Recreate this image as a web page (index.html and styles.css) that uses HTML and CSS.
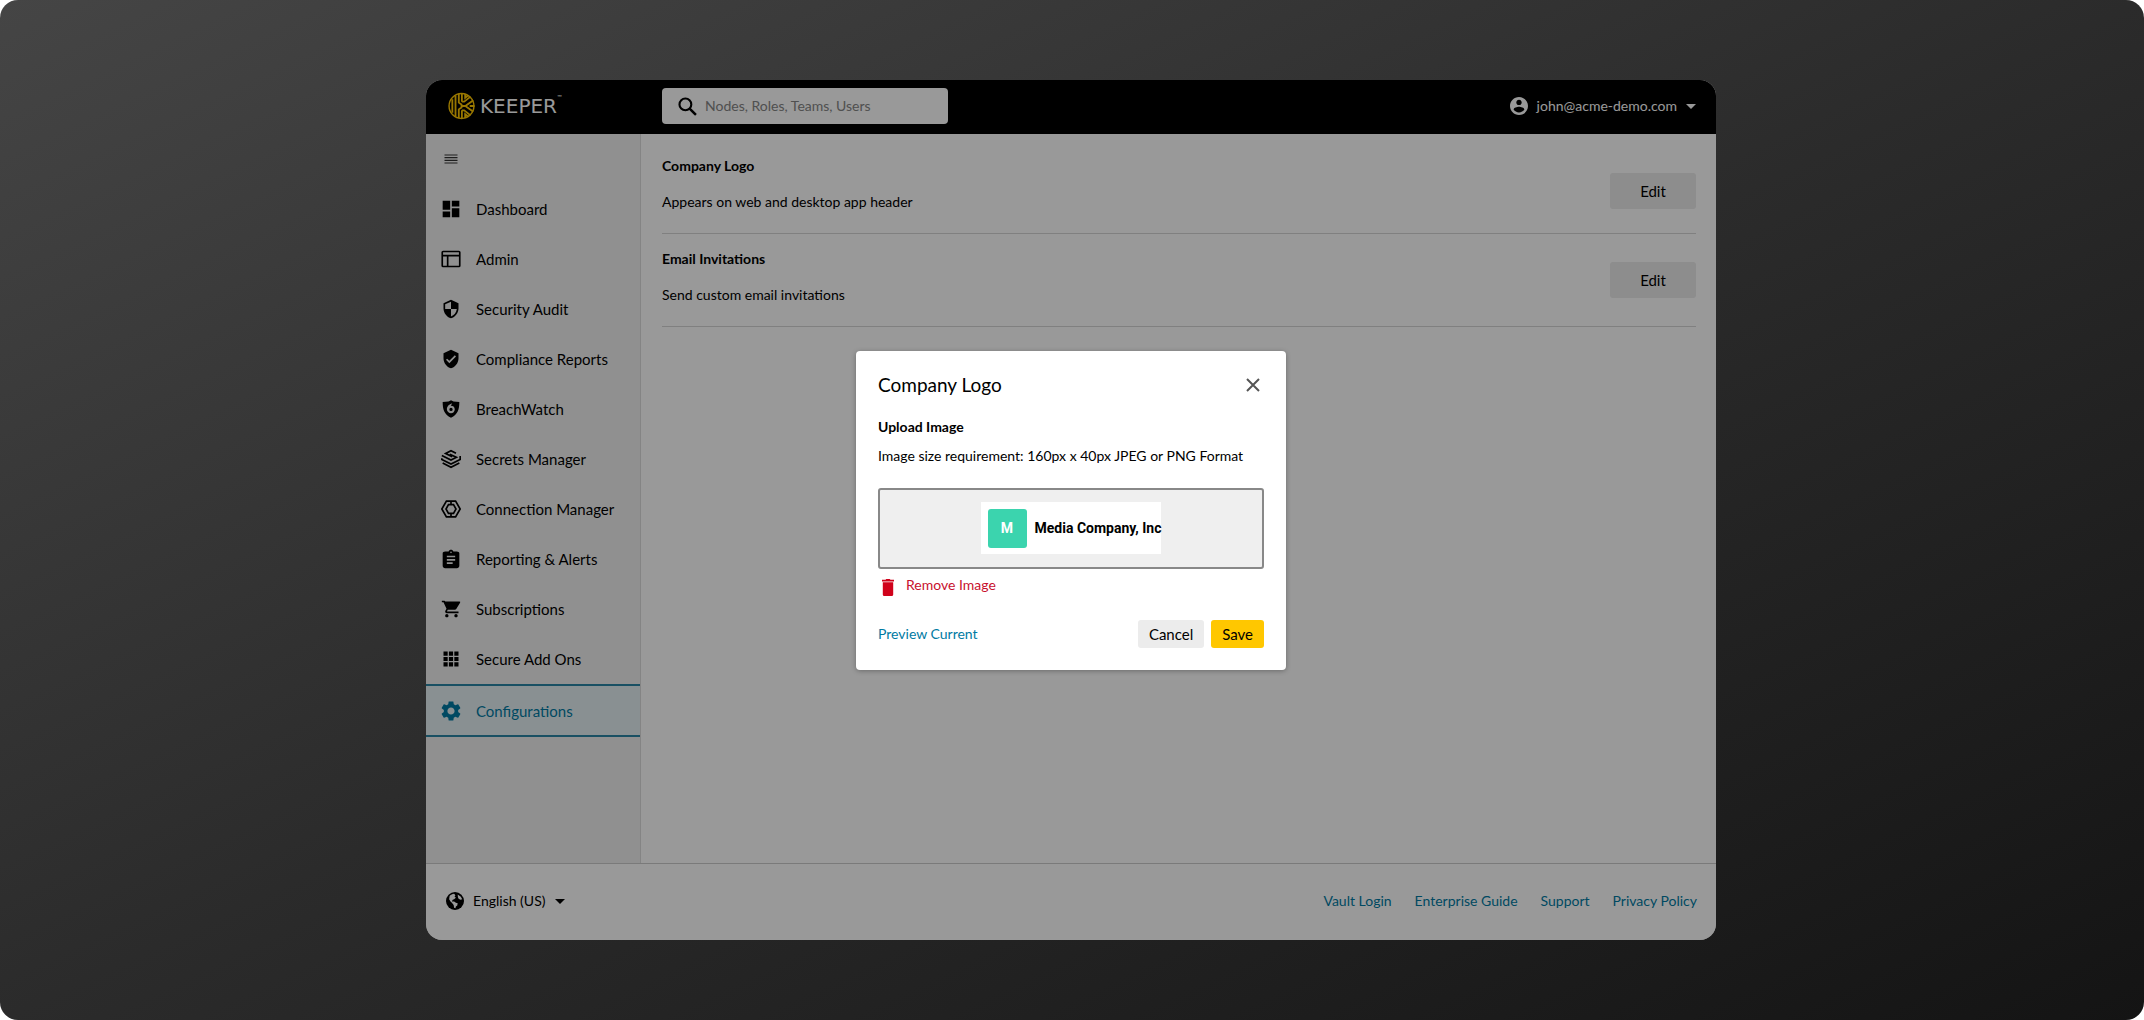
FILE: index.html
```html
<!DOCTYPE html>
<html lang="en">
<head>
<meta charset="utf-8">
<meta name="viewport" content="width=device-width, initial-scale=1">
<title>Keeper Admin Console</title>
<link rel="stylesheet" href="styles.css">
</head>
<body>
<div class="stage">
  <div class="app">
    <header class="topbar">
      <a class="brand" href="#">
        <svg class="brand-mark" viewBox="0 0 28 28" aria-hidden="true">
          <defs><clipPath id="disc"><circle cx="14" cy="14" r="13.500"/></clipPath></defs>
          <g clip-path="url(#disc)" fill="none" stroke="#ffc700" stroke-width="1.900">
            <path d="M4.500 7v14M7.800 3v22M11.200 1v9.500l2.800 2v3l-2.800 2V27"/>
            <path d="M14.400 1v8.500M14.400 27v-8.500M14.400 9.500h2.400L25 3M14.400 18.500h2.400L25 25M14 14h4l9-6.500M18 14l9 6.500M22.500 14H28M17.800 1v4.500L22 2M17.800 27v-4.500L22 26"/>
          </g>
          <circle cx="14" cy="14" r="12.900" fill="none" stroke="#ffc700" stroke-width="1.500"/>
        </svg>
        <span class="brand-name">KEEPER</span><span class="brand-tm">™</span>
      </a>
      <label class="search">
        <svg viewBox="0 0 18 18" aria-hidden="true"><circle cx="7" cy="7" r="5.600" fill="none" stroke="#000" stroke-width="2"/><path d="M11 11l6 6" stroke="#000" stroke-width="2.400"/></svg>
        <input type="text" placeholder="Nodes, Roles, Teams, Users" aria-label="Search">
      </label>
      <button class="account" type="button">
        <svg viewBox="2 2 20 20" aria-hidden="true"><path fill="#fff" d="M12 2C6.480 2 2 6.480 2 12s4.480 10 10 10 10-4.480 10-10S17.520 2 12 2zm0 3c1.660 0 3 1.340 3 3s-1.340 3-3 3-3-1.340-3-3 1.340-3 3-3zm0 14.200c-2.500 0-4.710-1.280-6-3.220.030-1.990 4-3.080 6-3.080 1.990 0 5.970 1.090 6 3.080-1.290 1.940-3.500 3.220-6 3.220z"/></svg>
        <span>john@acme-demo.com</span>
        <i class="caret"></i>
      </button>
    </header>

    <div class="body">
      <nav class="sidebar" aria-label="Main">
        <button class="menu-toggle" type="button" aria-label="Menu"><svg viewBox="0 0 13 10"><path d="M0 1h13M0 3.700h13M0 6.300h13M0 9h13" stroke="#333" stroke-width="1.200"/></svg></button>
        <ul>
          <li><a href="#"><svg viewBox="0 0 24 24"><path d="M2 13h9V2H2v11zm0 9h9v-7H2v7zm11 0h9V11h-9v11zm0-20v7h9V2h-9z"/></svg>Dashboard</a></li>
          <li><a href="#"><svg viewBox="0 0 24 24" class="line"><rect x="1.500" y="3" width="21" height="18" rx="1"/><path d="M2 8h20M8 8v13"/></svg>Admin</a></li>
          <li><a href="#"><svg viewBox="0 0 24 24"><path d="M12 1L3 5v6c0 5.550 3.840 10.740 9 12 5.160-1.260 9-6.450 9-12V5l-9-4zm0 10.990h7c-.53 4.120-3.280 7.790-7 8.940V12H5V6.300l7-3.110v8.800z"/></svg>Security Audit</a></li>
          <li><a href="#"><svg viewBox="0 0 24 24"><path d="M12 1L3 5v6c0 5.550 3.840 10.740 9 12 5.160-1.260 9-6.450 9-12V5l-9-4zm-2 16l-4-4 1.410-1.410L10 14.170l6.590-6.590L18 9l-8 8z"/></svg>Compliance Reports</a></li>
          <li><a href="#"><svg viewBox="0 0 24 24"><path fill-rule="evenodd" d="M12 1.500L9 3l-7 .5C2 13 4 18 12 22.500 20 18 22 13 22 3.500L15 3zM13.500 5l-1.800 3c2-.3 4.800 1 4.800 4.200 0 2.800-2 4.800-4.500 4.800s-5-1.900-5-5c0-3 2.600-6 6.500-7zM12 10.500a2 2 0 1 0 0 4 2 2 0 0 0 0-4z"/></svg>BreachWatch</a></li>
          <li><a href="#"><svg viewBox="0 0 24 24" class="line"><path d="M18 5l-6-3-6.500 3.300 8 4M10.500 6.300L18.500 10 12 13.200 1 7.800M1 11v1.500L12 18l11-5.500V8.500M2 16.800l10 5.200 10-5.200"/></svg>Secrets Manager</a></li>
          <li><a href="#"><svg viewBox="0 0 24 24" class="line"><path d="M6.500 2.500h11L23 12l-5.500 9.500h-11L1 12z"/><path d="M12 2.500v4M12 17.500v4M9 6.800h6L18 12l-3 5.200H9L6 12z"/></svg>Connection Manager</a></li>
          <li><a href="#"><svg viewBox="0 0 24 24"><path d="M19 3h-4.180C14.400 1.840 13.300 1 12 1s-2.400.84-2.820 2H5c-1.660 0-3 .9-3 2v15c0 1.660 1.340 3 3 3h14c1.660 0 3-1.340 3-3V5c0-1.100-1.340-2-3-2zm-7 0c.55 0 1 .45 1 1s-.45 1-1 1-1-.45-1-1 .45-1 1-1zm2 15H7v-2h7v2zm3-4H7v-2h10v2zm0-4H7V8h10v2z"/></svg>Reporting &amp; Alerts</a></li>
          <li><a href="#"><svg viewBox="0 0 24 24"><path d="M7 18c-1.100 0-1.990.9-1.990 2S5.900 22 7 22s2-.9 2-2-.9-2-2-2zM1 2v2h2l3.600 7.590-1.350 2.450c-.16.280-.25.610-.25.960 0 1.100.9 2 2 2h14v-2H7.420c-.14 0-.25-.11-.25-.25l.03-.12.900-1.630h8.450c.75 0 1.410-.41 1.750-1.030l4.580-7.490A1 1 0 0 0 22 3H5.210l-.94-1H1zm17 16c-1.100 0-1.990.9-1.990 2s.89 2 1.990 2 2-.9 2-2-.9-2-2-2z"/></svg>Subscriptions</a></li>
          <li><a href="#"><svg viewBox="0 0 24 24"><path d="M3 3h5v5H3zm6.500 0h5v5h-5zM16 3h5v5h-5zM3 9.500h5v5H3zm6.500 0h5v5h-5zm6.500 0h5v5h-5zM3 16h5v5H3zm6.500 0h5v5h-5zm6.500 0h5v5h-5z"/></svg>Secure Add Ons</a></li>
          <li><a href="#" class="active" aria-current="page"><svg viewBox="2 2 20 20"><path d="M19.140 12.940c.04-.3.060-.61.060-.94 0-.32-.02-.64-.07-.94l2.030-1.580c.18-.14.230-.41.120-.61l-1.920-3.320c-.12-.22-.37-.29-.59-.22l-2.390.96c-.5-.38-1.030-.7-1.620-.94L14.400 2.810c-.04-.24-.24-.41-.48-.41h-3.840c-.24 0-.43.170-.47.410L9.250 5.350c-.59.240-1.130.57-1.620.94l-2.390-.96c-.22-.08-.47 0-.59.220L2.740 8.870c-.12.210-.08.470.12.610l2.030 1.580c-.05.300-.09.630-.09.940s.02.640.07.940l-2.030 1.580c-.18.140-.23.410-.12.610l1.920 3.320c.12.220.370.290.590.220l2.390-.96c.5.380 1.030.7 1.620.94l.36 2.540c.05.240.240.410.480.410h3.840c.24 0 .44-.17.470-.41l.36-2.540c.59-.24 1.130-.56 1.620-.94l2.390.96c.22.080.470 0 .59-.22l1.920-3.320c.12-.22.070-.47-.12-.61l-2.010-1.580zM12 15.600c-1.980 0-3.600-1.620-3.600-3.600s1.620-3.600 3.600-3.600 3.600 1.620 3.600 3.600-1.620 3.600-3.600 3.600z"/></svg>Configurations</a></li>
        </ul>
      </nav>

      <main class="content">
        <section class="setting">
          <div class="setting-text"><h2>Company Logo</h2><p>Appears on web and desktop app header</p></div>
          <button class="edit" type="button">Edit</button>
        </section>
        <section class="setting">
          <div class="setting-text"><h2>Email Invitations</h2><p>Send custom email invitations</p></div>
          <button class="edit" type="button">Edit</button>
        </section>
      </main>
    </div>

    <footer class="footer">
      <label class="language">
        <svg viewBox="0 0 20 20" aria-hidden="true"><circle cx="10" cy="10" r="10"/><path fill="#fff" d="M4 4.500C5.500 3 7 2.200 9 2l1.500 1.500L9.500 5 11 6.500 9 8 7.500 8.500l-1 2H9l2 1.500 2 .5-.5 2.500-1.500 1-.5 2-1.500-.5-.5-3L6.500 12 5 10.500 3.500 8zM13 2.800l3.500 2.400L18 8l-2 .5-2-1-.8-2z"/></svg>
        <select aria-label="Language"><option>English (US)</option></select>
        <i class="caret"></i>
      </label>
      <div class="footer-links">
        <a href="#">Vault Login</a>
        <a href="#">Enterprise Guide</a>
        <a href="#">Support</a>
        <a href="#">Privacy Policy</a>
      </div>
    </footer>

    <div class="scrim">
      <div class="dialog" role="dialog" aria-modal="true" aria-labelledby="dialog-title">
        <div class="dialog-head">
          <h1 id="dialog-title">Company Logo</h1>
          <button class="close" type="button" aria-label="Close"><svg viewBox="0 0 14 14"><path d="M1 1l12 12M13 1L1 13" stroke="#555" stroke-width="2"/></svg></button>
        </div>
        <h2>Upload Image</h2>
        <p>Image size requirement: 160px x 40px JPEG or PNG Format</p>
        <div class="preview">
          <div class="company">
            <span class="company-mark">M</span>
            <span class="company-name">Media Company, Inc</span>
          </div>
        </div>
        <button class="remove" type="button">
          <svg viewBox="0 0 12 17" aria-hidden="true"><path fill="#d0021b" d="M0 .8h3.500L4.300 0h3.400l.8.800H12v1.700H0zM.8 3.200h10.400v12.300c0 .8-.6 1.500-1.400 1.500H2.200c-.8 0-1.400-.7-1.400-1.500z"/></svg>
          <span>Remove Image</span>
        </button>
        <div class="dialog-actions">
          <a href="#">Preview Current</a>
          <button class="cancel" type="button">Cancel</button>
          <button class="save" type="button">Save</button>
        </div>
      </div>
    </div>
  </div>
</div>
</body>
</html>
```
FILE: styles.css
```css
* { box-sizing: border-box; margin: 0; padding: 0; }

body {
  background: #fff;
  color: #000;
  font: 14px/20px Lato, "Liberation Sans", sans-serif;
}
button, input, select { font: inherit; color: inherit; border: 0; background: none; }
button { cursor: pointer; }
a { color: #007ba3; text-decoration: none; }
ul { list-style: none; }
svg { display: block; flex: none; }

.stage {
  display: flex;
  justify-content: center;
  min-height: 100vh;
  padding: 80px 26px 80px 24px;
  border-radius: 18px;
  background: linear-gradient(to bottom right, #454545 0%, #2b2b2b 50%, #141414 100%);
}
.app {
  position: relative;
  display: flex;
  flex-direction: column;
  width: 100%;
  max-width: 1290px;
  overflow: hidden;
  border-radius: 16px;
  background: #fff;
}

.topbar {
  display: flex;
  align-items: center;
  height: 54px;
  padding: 0 20px 2px 22px;
  background: #000;
  color: #fff;
}
.brand { display: flex; align-items: center; gap: 5px; width: 214px; color: #fff; }
.brand-mark { width: 27px; height: 28px; }
.brand-name { font: 20px/28px "DejaVu Sans", sans-serif; }
.brand-tm { margin-left: -5px; font-size: 6px; line-height: 10px; align-self: flex-start; }
.search {
  display: flex;
  align-items: center;
  gap: 8px;
  width: 286px;
  height: 36px;
  padding: 0 16px;
  border-radius: 4px;
  background: #fff;
}
.search svg { width: 19px; height: 19px; }
.search input { flex: 1; min-width: 0; outline: 0; color: #000; }
.search input::placeholder { color: #858585; opacity: 1; }
.account { display: flex; align-items: center; gap: 9px; margin-left: auto; }
.account svg { width: 18px; height: 18px; }
.caret { border: 5px solid transparent; border-top-color: currentColor; border-bottom: 0; }

.body { display: flex; flex: 1; }
.sidebar { width: 215px; background: #f0f0f0; border-right: 1px solid #ddd; }
.menu-toggle { display: flex; align-items: center; width: 50px; height: 50px; padding-left: 18px; }
.menu-toggle svg { width: 14px; height: 10px; }
.sidebar a {
  display: flex;
  align-items: center;
  gap: 15px;
  height: 50px;
  padding-left: 15px;
  color: #000;
  font-size: 15px;
}
.sidebar a svg { width: 20px; height: 20px; }
.sidebar .line { fill: none; stroke: #000; stroke-width: 2; }
.sidebar .active {
  height: 53px;
  border: solid #2a86a5;
  border-width: 2px 0;
  background: #e4f0f4;
  color: #007ba3;
}
.active svg { fill: #007ba3; }

.content { flex: 1; padding: 14px 20px 0 21px; }
.setting {
  display: flex;
  align-items: center;
  justify-content: space-between;
  border-bottom: 1px solid #d6d6d6;
}
.setting-text { padding: 15px 0 21px; }
.setting:first-child .setting-text { padding-top: 8px; }
.setting h2 { margin-bottom: 16px; font: inherit; font-weight: 700; }
.edit { width: 86px; height: 36px; border-radius: 3px; background: #ebebeb; font-size: 15px; }

.footer {
  display: flex;
  align-items: center;
  justify-content: space-between;
  height: 77px;
  padding: 0 19px 2px 20px;
  border-top: 1px solid #ccc;
}
.language { display: flex; align-items: center; gap: 9px; }
.language svg { width: 18px; height: 18px; }
.language select { appearance: none; outline: 0; }
.footer-links { display: flex; gap: 23px; }

/* Modal layer over the whole console */
.scrim {
  position: absolute;
  inset: 0;
  display: grid;
  place-items: center;
  background: rgba(0, 0, 0, .4);
}
.dialog {
  width: 430px;
  max-width: 100%;
  padding: 22px;
  border-radius: 4px;
  background: #fff;
  box-shadow: 0 1px 5px rgba(0, 0, 0, .3);
}
.dialog-head { display: flex; align-items: center; justify-content: space-between; margin-bottom: 20px; }
.dialog h1 { font-size: 19px; line-height: 24px; font-weight: 400; }
.close { padding: 4px; }
.close svg { width: 14px; height: 14px; }
.dialog h2 { margin-bottom: 9px; font: inherit; font-weight: 700; }
.preview {
  display: grid;
  place-items: center;
  height: 81px;
  margin: 22px 0 6px;
  border: 2px solid #888;
  border-radius: 3px;
  background: #efefef;
}
.company {
  display: flex;
  align-items: center;
  gap: 8px;
  height: 52px;
  padding-left: 7px;
  background: #fff;
  font-family: Roboto, sans-serif;
  font-weight: 700;
}
.company-mark {
  width: 39px;
  border-radius: 3px;
  background: #3bd4ae;
  color: #fff;
  line-height: 39px;
  text-align: center;
}
.company-name { font-size: 14px; }
.remove { display: flex; gap: 12px; padding-left: 4px; color: #c8102e; }
.remove svg { width: 12px; height: 17px; margin-top: 4px; }
.dialog-actions { display: flex; align-items: center; gap: 7px; margin-top: 24px; }
.dialog-actions a { margin-right: auto; }
.cancel, .save { height: 28px; padding: 0 11px; border-radius: 3px; background: #ececec; font-size: 15px; }
.save { background: #ffc700; }
```
